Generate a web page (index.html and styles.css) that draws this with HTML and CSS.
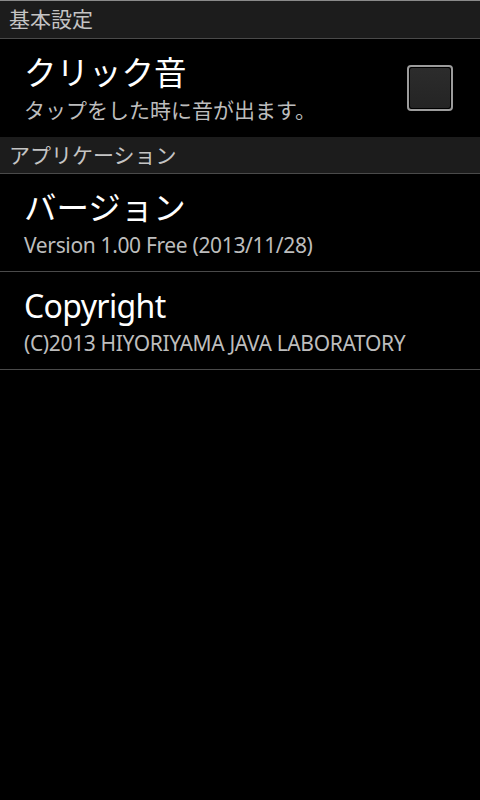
FILE: index.html
```html
<!DOCTYPE html>
<html lang="ja">
<head>
<meta charset="utf-8">
<title>設定</title>
<link rel="stylesheet" href="styles.css">
</head>
<body>
<div class="screen">
  <div class="category first">基本設定</div>
  <div class="pref">
    <div class="pref-text">
      <div class="pref-title">クリック音</div>
      <div class="pref-summary">タップをした時に音が出ます。</div>
    </div>
    <div class="checkbox"><div class="checkbox-inner"></div></div>
  </div>
  <div class="category">アプリケーション</div>
  <div class="pref divided">
    <div class="pref-text">
      <div class="pref-title">バージョン</div>
      <div class="pref-summary latin">Version 1.00 Free (2013/11/28)</div>
    </div>
  </div>
  <div class="pref divided">
    <div class="pref-text">
      <div class="pref-title latin">Copyright</div>
      <div class="pref-summary latin">(C)2013 HIYORIYAMA JAVA LABORATORY</div>
    </div>
  </div>
</div>
</body>
</html>
```

FILE: styles.css
```css
html, body {
  margin: 0;
  padding: 0;
  background: #000;
}
body {
  width: 480px;
  height: 800px;
  overflow: hidden;
  font-family: "Noto Sans", "Noto Sans CJK JP", sans-serif;
}
.screen {
  display: flex;
  flex-direction: column;
}
.category {
  height: 36px;
  line-height: 36px;
  padding-left: 9px;
  background: #1c1c1c;
  color: #c4c4c4;
  font-size: 21px;
  border-bottom: 1px solid #4a4a4a;
}
.category.first {
  border-top: 1px solid #8a8a8a;
  height: 37px;
  line-height: 37px;
}
.pref {
  display: flex;
  align-items: center;
  height: 98px;
  box-sizing: border-box;
  padding: 2px 27px 0 24px;
}
.pref.divided {
  height: 98px;
  border-bottom: 1px solid #4a4a4a;
}
.pref-text {
  flex: 1;
  display: flex;
  flex-direction: column;
}
.pref-title {
  color: #fff;
  font-size: 32.5px;
  line-height: 40px;
}
.pref-title.latin {
  font-size: 32px;
  letter-spacing: -0.65px;
}
.pref-summary {
  color: #bdbdbd;
  font-size: 21px;
  line-height: 30px;
  margin-top: 2px;
}
.pref-summary.latin {
  letter-spacing: -0.35px;
}
.checkbox {
  width: 46px;
  height: 46px;
  box-sizing: border-box;
  border: 2px solid #9c9c9c;
  border-radius: 4px;
  padding: 1px;
  margin-top: -2px;
}
.checkbox-inner {
  width: 100%;
  height: 100%;
  background: linear-gradient(#2c2c2c, #242424);
  border-radius: 2px;
}
```
